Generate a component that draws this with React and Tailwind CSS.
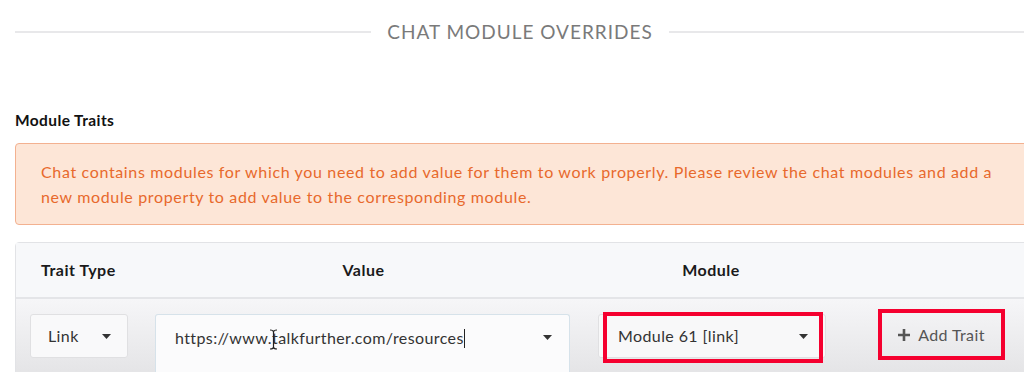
import React from 'react';

// ─── Bits ────────────────────────────────────────────────────────────────────

function Caret({ className = '' }) {
  return (
    <svg width="9" height="5" viewBox="0 0 9 5" className={className}>
      <path d="M0 0h9L4.5 5z" fill="#333" />
    </svg>
  );
}

function RedMark({ className = '' }) {
  return <div className={`absolute border-[4px] border-[#f5002f] pointer-events-none ${className}`} />;
}

// ─── Page ────────────────────────────────────────────────────────────────────

export default function App() {
  return (
    <div
      className="w-[1024px] h-[372px] overflow-hidden bg-white relative"
      style={{ fontFamily: 'Lato, "Open Sans", sans-serif' }}
    >
      <div className="w-[1040px] ml-[15px]">
        {/* Section title */}
        <div className="flex items-center pt-[21px] pr-[30px]">
          <div className="flex-1 h-[2px] bg-[#e8e8ea]" />
          <h2 className="mx-[16px] text-[19px] leading-[22px] tracking-[1px] text-[#7a7a7a] uppercase">
            Chat Module Overrides
          </h2>
          <div className="flex-1 h-[2px] bg-[#e8e8ea]" />
        </div>

        <p className="mt-[68px] text-[15.5px] leading-[18px] font-bold text-[#111] tracking-[0.4px]">
          Module Traits
        </p>

        {/* Warning */}
        <div className="mt-[14px] h-[82px] rounded-[4px] border border-[#f3b190] bg-[#fde6d7] pl-[25px] pt-[15px]">
          <p className="w-[975px] text-[16px] leading-[25px] tracking-[0.65px] text-[#e8692c]">
            Chat contains modules for which you need to add value for them to work properly. Please review the chat modules and add a new module property to add value to the corresponding module.
          </p>
        </div>

        {/* Traits table */}
        <div className="mt-[17px] rounded-t-[4px] border border-[#e2e3e6]">
          <div className="flex h-[56px] items-center bg-[#f7f8fa] border-b-2 border-[#e4e5e8] px-[15px] text-[16px] tracking-[0.5px] font-bold text-[#1a1a1a]">
            <div className="w-[98px] pl-[10px] whitespace-nowrap">Trait Type</div>
            <div className="ml-[27px] w-[415px] text-center">Value</div>
            <div className="ml-[28px] w-[224px] text-center">Module</div>
          </div>

          <div className="flex items-start h-[80px] px-[14px] pt-[15px] bg-gradient-to-b from-[#f6f6f8] to-[#e3e3e5] text-[16px] tracking-[0.4px] text-[#333]">
            <div className="w-[98px] h-[44px] flex items-center justify-between pl-[17px] pr-[16px] rounded-[3px] border border-[#e0e0e2] bg-[#f9f9fa]">
              Link
              <Caret />
            </div>

            <div className="ml-[27px] w-[415px] h-[70px] rounded-t-[3px] border border-[#d6e2ea] border-b-0 bg-[#fbfbfc] flex items-start justify-between pl-[19px] pr-[17px] pt-[11px]">
              <span className="whitespace-nowrap">
                https://www.
                <span className="relative">
                  t
                  <svg width="9" height="21" viewBox="0 0 9 21" className="absolute left-[-3px] top-[1px]">
                    <path d="M1 1c2 0 3.5 1 3.5 2v15c0 1-1.5 2-3.5 2M8 1c-2 0-3.5 1-3.5 2v15c0 1 1.5 2 3.5 2" stroke="#222" strokeWidth="1.2" fill="none" />
                  </svg>
                </span>
                alkfurther.com/resources
                <span className="inline-block align-middle w-[1px] h-[19px] bg-[#222] -mt-[2px]" />
              </span>
              <Caret className="mt-[9px]" />
            </div>

            <div className="relative ml-[28px] w-[228px] h-[44px] flex items-center justify-between pl-[19px] pr-[17px] rounded-[3px] border border-[#e0e0e2] bg-[#f8f8f9]">
              Module 61 [link]
              <Caret />
              <RedMark className="left-[4px] top-[-3px] w-[220px] h-[51px]" />
            </div>

            <div className="relative ml-[52px] w-[127px] h-[51px] -mt-[5px] flex items-center justify-center gap-[8px] text-[#555]">
              <svg width="12" height="12" viewBox="0 0 12 12">
                <path d="M6 0v12M0 6h12" stroke="#555" strokeWidth="2.6" />
              </svg>
              Add Trait
              <RedMark className="inset-0" />
            </div>
          </div>
        </div>
      </div>
    </div>
  );
}
